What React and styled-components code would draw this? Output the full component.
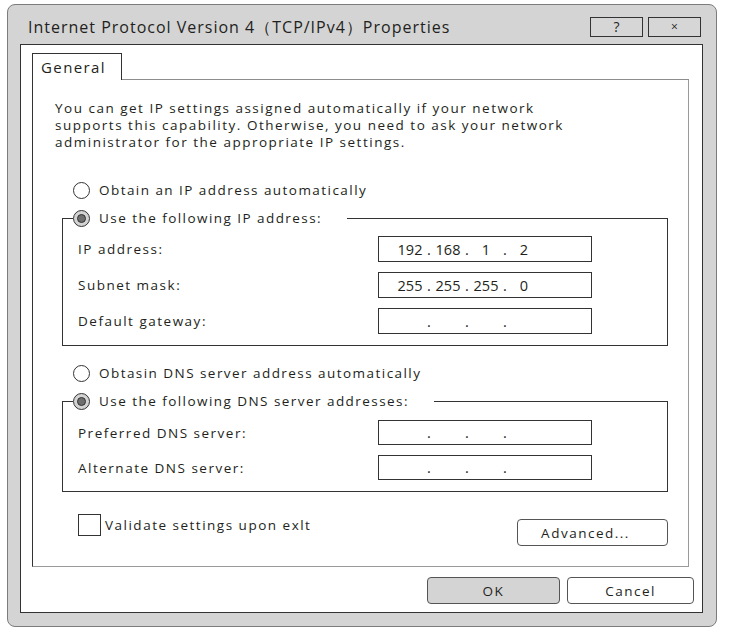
import React from "react";
import styled, { createGlobalStyle } from "styled-components";

const GlobalStyle = createGlobalStyle`
  body {
    margin: 0;
    background: #ffffff;
    font-family: "Open Sans", "Noto Sans", sans-serif;
    color: #231f20;
  }
`;

const Window = styled.div`
  box-sizing: border-box;
  width: 710px;
  height: 623px;
  margin: 4px 0 0 7px;
  padding: 0 13px 13px 12px;
  display: flex;
  flex-direction: column;
  background: #d4d4d4;
  border: 1px solid #7c7c7c;
  border-radius: 8px;
`;

const TitleBar = styled.div`
  height: 39px;
  display: flex;
  align-items: center;
  padding-top: 5px;
  box-sizing: border-box;
`;

const Title = styled.div`
  flex: 1;
  margin-left: 8px;
  font-size: 16px;
  letter-spacing: 1px;
`;

const CaptionButton = styled.div`
  box-sizing: border-box;
  width: 53px;
  height: 20px;
  margin-left: 5px;
  border: 1px solid #333;
  background: #d6d6d6;
  display: flex;
  align-items: center;
  justify-content: center;
  font-size: ${(p) => p.$size || 13}px;
  line-height: 1;
  &:last-child {
    margin-right: 2px;
  }
`;

const Client = styled.div`
  flex: 1;
  display: flex;
  flex-direction: column;
  background: #ffffff;
  border: 1px solid #333;
  padding: 8px 8px 8px 11px;
`;

const TabStrip = styled.div`
  display: flex;
  height: 27px;
  margin-right: 5px;
`;

const Tab = styled.div`
  box-sizing: border-box;
  width: 90px;
  border: 1px solid #333;
  border-bottom: none;
  padding-left: 8px;
  font-size: 15px;
  letter-spacing: 1.4px;
  line-height: 26px;
`;

const TabRest = styled.div`
  flex: 1;
  border-bottom: 1px solid #8d8d8d;
`;

const Panel = styled.div`
  box-sizing: border-box;
  height: 487px;
  margin-right: 5px;
  padding: 20px 20px 0 22px;
  border: 1px solid #9a9a9a;
  border-left-color: #333;
  border-top: none;
  display: flex;
  flex-direction: column;
`;

const Description = styled.p`
  margin: 0;
  font-size: 13.5px;
  line-height: 17px;
  letter-spacing: 1.5px;
`;

const RadioRow = styled.label`
  display: flex;
  align-items: center;
  gap: 9px;
  height: 20px;
  margin: ${(p) => p.$margin || "0"};
  font-size: 13.5px;
  letter-spacing: 1.45px;
`;

const RadioCircle = styled.span`
  box-sizing: border-box;
  width: 17px;
  height: 17px;
  border-radius: 50%;
  border: 1px solid #333;
  background: ${(p) => (p.$checked ? "#d3d3d3" : "#ffffff")};
  display: flex;
  align-items: center;
  justify-content: center;
  &::after {
    content: "";
    display: ${(p) => (p.$checked ? "block" : "none")};
    width: 9px;
    height: 9px;
    box-sizing: border-box;
    border-radius: 50%;
    background: #6f6f6f;
    border: 1px solid #333;
  }
`;

const Group = styled.fieldset`
  margin: ${(p) => p.$top}px 0 0 7px;
  padding: 0;
  border: 1px solid #333;
  min-width: 0;
`;

const Legend = styled.legend`
  margin-left: 10px;
  padding: 0 25px 0 0;
`;

const Rows = styled.div`
  display: grid;
  grid-template-columns: 300px 214px;
  row-gap: 10px;
  padding: ${(p) => p.$top}px 0 ${(p) => p.$bottom}px 15px;
`;

const FieldLabel = styled.div`
  display: flex;
  align-items: center;
  font-size: 13.5px;
  letter-spacing: 1.5px;
`;

const IpBox = styled.div`
  box-sizing: border-box;
  height: ${(p) => p.$h}px;
  border: 1px solid #333;
  display: flex;
  align-items: center;
  padding-left: 15px;
  font-size: 14.5px;
`;

const Octet = styled.span`
  width: 32px;
  text-align: center;
`;

const Dot = styled.span`
  width: 6px;
  text-align: center;
`;

const BottomRow = styled.div`
  display: flex;
  justify-content: space-between;
  align-items: flex-start;
  margin: 22px 0 0 23px;
`;

const CheckRow = styled.label`
  display: flex;
  align-items: center;
  gap: 4px;
  font-size: 13.5px;
  letter-spacing: 1.5px;
`;

const CheckBox = styled.span`
  box-sizing: border-box;
  width: 23px;
  height: 22px;
  border: 1px solid #333;
  background: #fff;
`;

const Button = styled.button`
  box-sizing: border-box;
  width: ${(p) => p.$w}px;
  height: 27px;
  margin-top: ${(p) => p.$top || 0}px;
  border: 1px solid #555;
  border-radius: 4px;
  background: ${(p) => (p.$primary ? "#d4d4d4" : "#ffffff")};
  font-family: inherit;
  font-size: 13.5px;
  letter-spacing: 1.5px;
  color: #231f20;
  padding: 0 ${(p) => p.$shift || 0}px 0 0;
`;

const Footer = styled.div`
  display: flex;
  justify-content: flex-end;
  gap: 7px;
  margin-top: 10px;
`;

const IpField = ({ value, h = 26 }) => {
  const parts = value ? value.split(".") : ["", "", "", ""];
  return (
    <IpBox $h={h}>
      {parts.map((p, i) => (
        <React.Fragment key={i}>
          <Octet>{p}</Octet>
          {i < 3 && <Dot>.</Dot>}
        </React.Fragment>
      ))}
    </IpBox>
  );
};

const Radio = ({ checked, children, margin }) => (
  <RadioRow $margin={margin}>
    <RadioCircle $checked={checked} />
    {children}
  </RadioRow>
);

export default function App() {
  return (
    <>
      <GlobalStyle />
      <Window>
        <TitleBar>
          <Title>Internet Protocol Version 4（TCP/IPv4）Properties</Title>
          <CaptionButton $size={14}>?</CaptionButton>
          <CaptionButton $size={12}>×</CaptionButton>
        </TitleBar>
        <Client>
          <TabStrip>
            <Tab>General</Tab>
            <TabRest />
          </TabStrip>
          <Panel>
            <Description>
              You can get IP settings assigned automatically if your network
              <br />
              supports this capability. Otherwise, you need to ask your network
              <br />
              administrator for the appropriate IP settings.
            </Description>

            <Radio margin="29px 0 0 18px">Obtain an IP address automatically</Radio>
            <Group $top={8}>
              <Legend>
                <Radio checked>Use the following IP address:</Radio>
              </Legend>
              <Rows $top={8} $bottom={11}>
                <FieldLabel>IP address:</FieldLabel>
                <IpField value="192.168.1.2" />
                <FieldLabel>Subnet mask:</FieldLabel>
                <IpField value="255.255.255.0" />
                <FieldLabel>Default gateway:</FieldLabel>
                <IpField />
              </Rows>
            </Group>

            <Radio margin="17px 0 0 18px">Obtasin DNS server address automatically</Radio>
            <Group $top={8}>
              <Legend>
                <Radio checked>Use the following DNS server addresses:</Radio>
              </Legend>
              <Rows $top={9} $bottom={11}>
                <FieldLabel>Preferred DNS server:</FieldLabel>
                <IpField h={25} />
                <FieldLabel>Alternate DNS server:</FieldLabel>
                <IpField h={25} />
              </Rows>
            </Group>

            <BottomRow>
              <CheckRow>
                <CheckBox />
                Validate settings upon exlt
              </CheckRow>
              <Button $w={151} $top={5} $shift={14}>Advanced...</Button>
            </BottomRow>
          </Panel>
          <Footer>
            <Button $w={133} $primary>OK</Button>
            <Button $w={127}>Cancel</Button>
          </Footer>
        </Client>
      </Window>
    </>
  );
}
